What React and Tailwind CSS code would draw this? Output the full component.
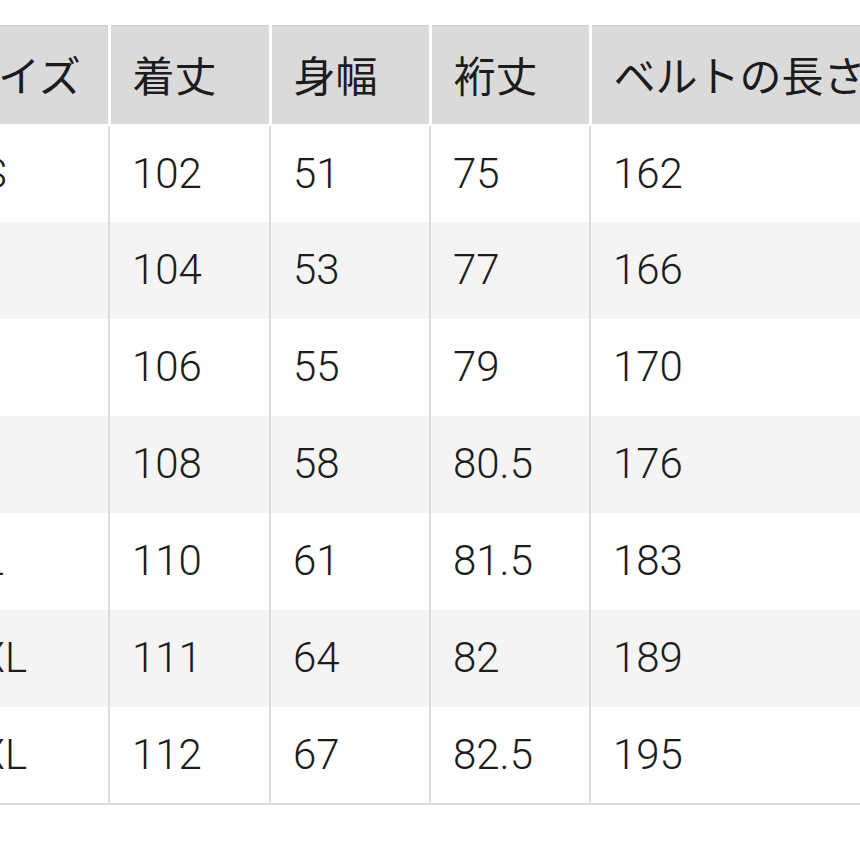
import React from 'react'

const headers = ['サイズ', '着丈', '身幅', '裄丈', 'ベルトの長さ']

const rows = [
  ['XS', '102', '51', '75', '162'],
  ['S', '104', '53', '77', '166'],
  ['M', '106', '55', '79', '170'],
  ['L', '108', '58', '80.5', '176'],
  ['XL', '110', '61', '81.5', '183'],
  ['2XL', '111', '64', '82', '189'],
  ['3XL', '112', '67', '82.5', '195'],
]

function App() {
  return (
    <div className="w-[860px] h-[860px] overflow-hidden bg-white pt-[25px] font-['Roboto','Noto_Sans_CJK_JP',sans-serif] text-[42px] text-[#1c1c1c]">
      <table className="ml-[-66px] table-fixed border-collapse w-[1000px]">
        <colgroup>
          <col className="w-[175px]" />
          <col className="w-[161px]" />
          <col className="w-[160px]" />
          <col className="w-[160px]" />
          <col className="w-[344px]" />
        </colgroup>
        <thead>
          <tr className="h-[99px] bg-[#dadada] border-t border-[#d0d0d0]">
            {headers.map((h) => (
              <th
                key={h}
                className="text-left font-normal pl-[22px] whitespace-nowrap overflow-hidden border-r-[3px] border-b-2 border-white leading-none pt-[6px]"
              >
                {h}
              </th>
            ))}
          </tr>
        </thead>
        <tbody className="border-b-2 border-[#dcdcdc]">
          {rows.map((r, ri) => (
            <tr key={ri} className={`h-[97px] ${ri % 2 === 1 ? 'bg-[#f4f4f4]' : 'bg-white'}`}>
              {r.map((c, ci) => (
                <td
                  key={ci}
                  className="pl-[22px] font-light whitespace-nowrap border-r-2 border-[#dcdcdc] leading-none"
                >
                  {c}
                </td>
              ))}
            </tr>
          ))}
        </tbody>
      </table>
    </div>
  )
}

export default App
